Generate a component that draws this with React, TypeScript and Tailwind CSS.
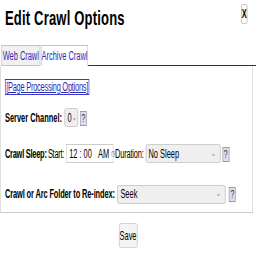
import React from 'react';

const font = { fontFamily: '"Liberation Sans", Arial, Helvetica, sans-serif' };

function Help() {
  return (
    <span className="inline-flex h-[15px] w-[11px] items-center justify-center border border-[#9a9ab4] bg-[#dcdcea] text-[11px] leading-none text-[#333]">
      ?
    </span>
  );
}

function FakeSelect({ value, width }: { value: string; width: string }) {
  return (
    <span
      className={`inline-flex h-[19px] ${width} items-center justify-between rounded-[3px] border border-[#c4c4c4] bg-[#efefef] pl-[4px] pr-[6px] text-[12px] text-black`}
    >
      <span>{value}</span>
      <span className="text-[9px] text-[#777]">⌄</span>
    </span>
  );
}

export default function App() {
  return (
    <div className="h-[256px] w-[256px] overflow-hidden bg-white text-black" style={font}>
      <div className="w-[413px] origin-top-left scale-x-[0.62]">
        <div className="flex items-start justify-between pl-[8px] pr-[14px] pt-[5px]">
          <h1 className="text-[21px] font-bold leading-[25px] tracking-[0.3px]">Edit Crawl Options</h1>
          <span className="mt-[-1px] flex h-[20px] w-[10px] items-center justify-center rounded-[2px] border border-[#bbb] text-[12px] font-bold">
            X
          </span>
        </div>

        <div className="mt-[15px] flex h-[21px] items-stretch pl-[2px]">
          <span className="flex w-[63px] items-center justify-center border border-[#c4c4c4] bg-[#f0f0f0] text-[12px] text-[#2c2cb4]">
            Web Crawl
          </span>
          <span className="ml-[1px] flex w-[76px] items-center justify-center border border-b-0 border-[#c4c4c4] bg-white text-[12px] text-[#2c2cb4]">
            Archive Crawl
          </span>
          <div className="flex-1 border-b border-[#333]" />
        </div>

        <div className="mr-[5px] h-[147px] border border-t-0 border-[#ccc] pl-[7px] pt-[12px] text-[12px]">
          <span className="border border-[#3a3ac8] px-[1px] tracking-[-0.4px] text-[#2c2cb4] underline">
            [Page Processing Options]
          </span>

          <div className="mt-[12px] flex h-[19px] items-center">
            <b>Server Channel:</b>
            <span className="ml-[4px]">
              <FakeSelect value="0" width="w-[22px]" />
            </span>
            <span className="ml-[3px]">
              <Help />
            </span>
          </div>

          <div className="mt-[17px] flex h-[19px] items-center whitespace-nowrap">
            <b className="tracking-[-0.4px]">Crawl Sleep:</b>
            <span className="ml-[2px] tracking-[-0.4px]">Start:</span>
            <span className="ml-[3px] inline-flex h-[19px] w-[76px] items-center border border-[#ccc] pl-[4px] text-[12px]">
              12 : 00&nbsp;&nbsp;&nbsp;AM<span className="ml-[3px] text-[8px] text-[#666]">◷</span>
            </span>
            <span className="ml-[3px] tracking-[-0.3px]">Duration:</span>
            <span className="ml-[3px]">
              <FakeSelect value="No Sleep" width="w-[121px]" />
            </span>
            <span className="ml-[3px]">
              <Help />
            </span>
          </div>

          <div className="mt-[21px] flex h-[20px] items-center whitespace-nowrap">
            <b className="tracking-[-0.2px]">Crawl or Arc Folder to Re-index:</b>
            <span className="ml-[4px]">
              <FakeSelect value="Seek" width="w-[175px]" />
            </span>
            <span className="ml-[5px]">
              <Help />
            </span>
          </div>
        </div>

        <div className="mt-[10px] flex justify-center">
          <span className="flex h-[25px] w-[30px] items-center justify-center rounded-[3px] border border-[#ccc] bg-[#f4f4f4] text-[12px]">
            Save
          </span>
        </div>
      </div>
    </div>
  );
}
